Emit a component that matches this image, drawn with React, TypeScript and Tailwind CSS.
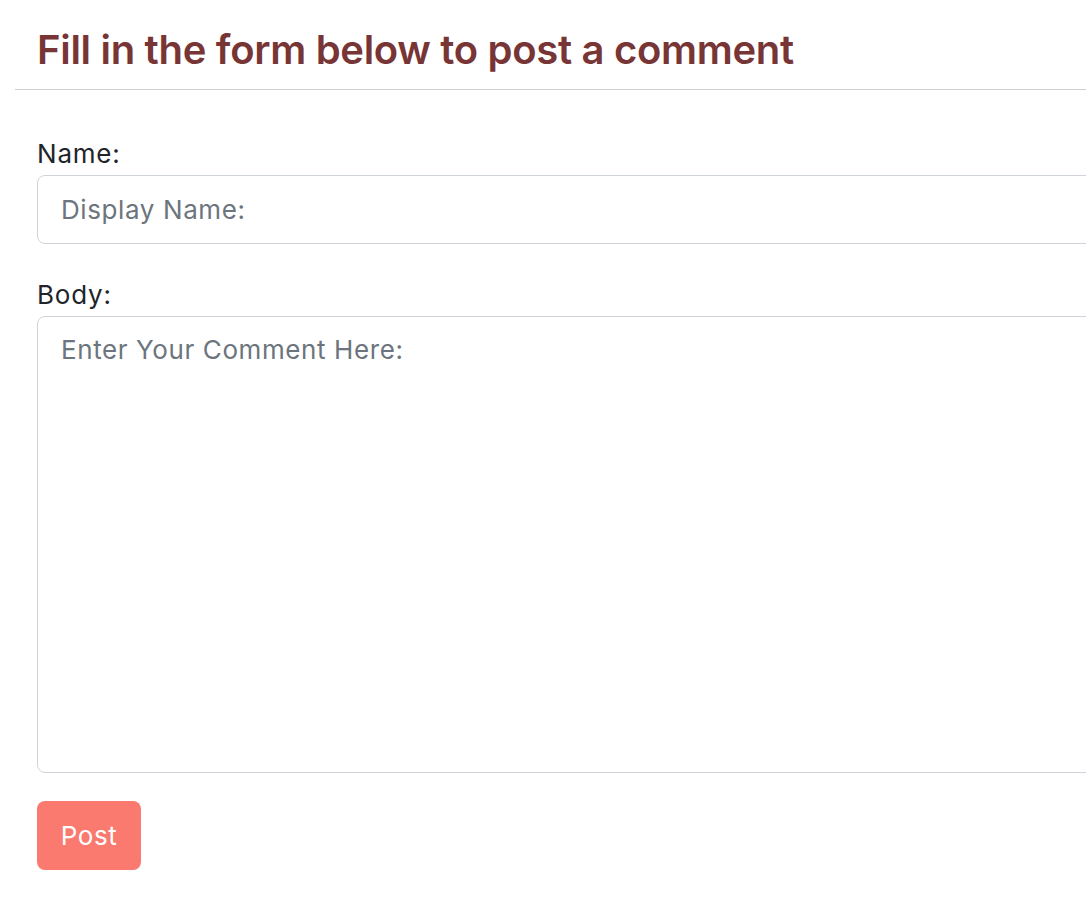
import React from "react";

export default function App() {
  return (
    <div className="w-screen min-h-screen overflow-hidden bg-white" style={{ fontFamily: "Inter, 'Liberation Sans', sans-serif" }}>
      <div className="pl-[15px]">
        <div className="border-b border-[#cfcfcf] pl-[22px] pt-[25px] pb-[14px]">
          <h2 className="text-[40px] leading-[50px] font-semibold text-[#773535] tracking-[-0.3px]">
            Fill in the form below to post a comment
          </h2>
        </div>
      </div>
      <form className="pl-[37px] pt-[49px]">
        <label className="block text-[26px] leading-[30px] tracking-[0.8px] text-[#212529] mb-[6px]">Name:</label>
        <input
          type="text"
          placeholder="Display Name:"
          className="block w-[1100px] h-[69px] border border-[#ced4da] rounded-[8px] px-[23px] text-[26px] tracking-[0.6px] text-[#212529] placeholder:text-[#6c757d] outline-none"
        />
        <label className="block text-[26px] leading-[30px] tracking-[0.8px] text-[#212529] mt-[36px] mb-[6px]">Body:</label>
        <textarea
          placeholder="Enter Your Comment Here:"
          className="block w-[1100px] h-[457px] border border-[#ced4da] rounded-[8px] px-[23px] pt-[14px] text-[26px] leading-[38px] tracking-[0.6px] text-[#212529] placeholder:text-[#6c757d] outline-none resize-none"
        />
        <button
          type="button"
          className="mt-[28px] w-[104px] h-[69px] rounded-[8px] bg-[#fa7a6f] text-white text-[26px] tracking-[0.6px]"
        >
          Post
        </button>
      </form>
    </div>
  );
}
